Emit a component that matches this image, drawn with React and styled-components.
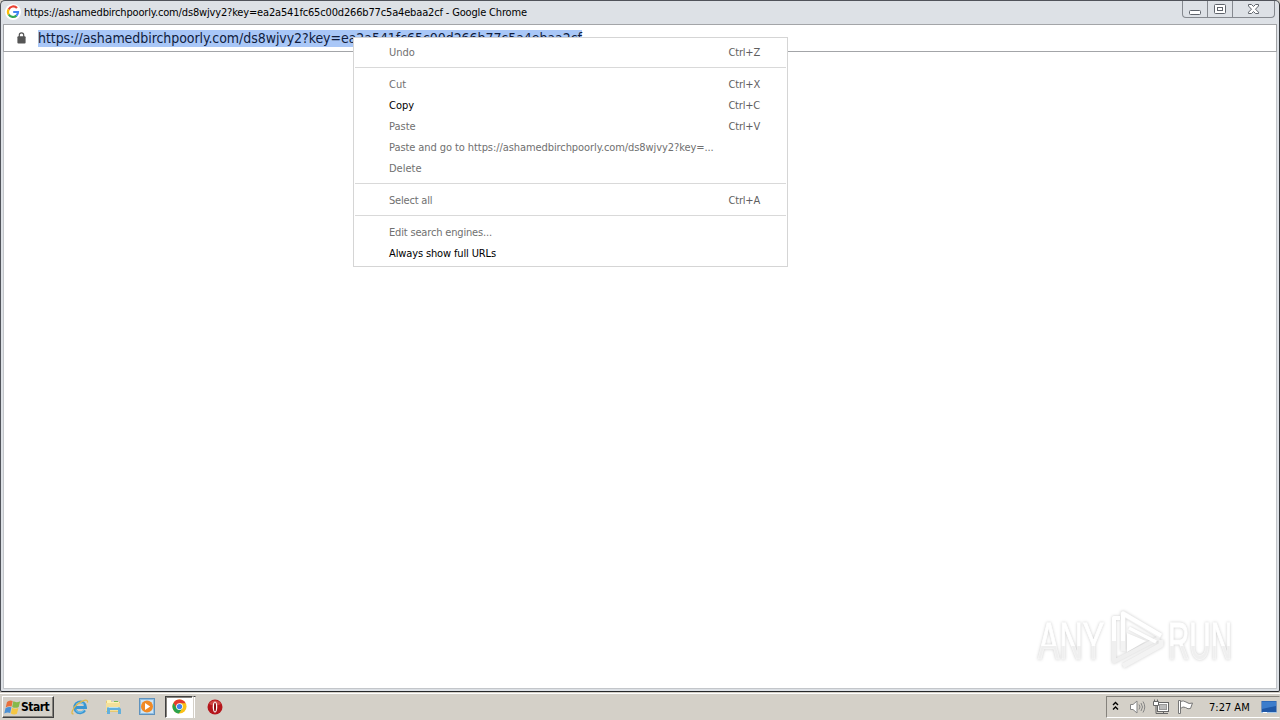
import React from "react";
import styled, { createGlobalStyle } from "styled-components";

const Global = createGlobalStyle`
  * { box-sizing: border-box; }
  body { margin: 0; overflow: hidden; background: #d4d0c8; }
`;

const Screen = styled.div`
  position: relative;
  display: flex;
  flex-direction: column;
  width: 1280px;
  height: 720px;
  overflow: hidden;
  font-family: "DejaVu Sans Condensed", "DejaVu Sans", sans-serif;
  font-stretch: condensed;
  font-size: 11px;
  color: #000;
  svg { display: block; flex: none; }
`;

const Window = styled.section`
  display: flex;
  flex-direction: column;
  height: 692px;
  padding: 0 2px 2px;
  background: #dde1e6;
  border: 1px solid #50535a;
  border-bottom-color: #26282b;
  border-right-color: #34373b;
  border-radius: 5px 5px 2px 2px;
`;

const TitleBar = styled.header`
  display: flex;
  align-items: flex-start;
  height: 23px;
  padding-left: 2px;
`;

const Favicon = styled.div`
  margin-top: 3px;
  width: 16px;
  height: 16px;
  border-radius: 50%;
  background: #fff;
`;

const Title = styled.span`
  flex: 1;
  padding-left: 3px;
  line-height: 23px;
  white-space: nowrap;
  letter-spacing: ${(p) => p.$spacing}px;
`;

const Controls = styled.div`
  display: flex;
  height: 17px;
  margin-right: 2px;
  border: 1px solid #85898f;
  border-top: 0;
  border-radius: 0 0 4px 4px;
`;

const Control = styled.div`
  display: flex;
  justify-content: center;
  width: ${(p) => p.$width}px;
  & + & { border-left: 1px solid #85898f; }
`;

const AddressBar = styled.div`
  display: flex;
  align-items: center;
  height: 28px;
  flex: none;
  padding-left: 13px;
  background: #fff;
  border: 1px solid #a3a5a8;
`;

const Url = styled.span`
  margin: 1px 0 0 12px;
  height: 17px;
  line-height: 16px;
  font-size: 14px;
  color: #101c3c;
  background: #a9c7f7;
  white-space: nowrap;
  letter-spacing: ${(p) => p.$spacing}px;
`;

const Page = styled.main`
  flex: 1;
  background: #fff;
  border: 1px solid #c3c6ca;
  border-top: 0;
`;

const Menu = styled.div`
  position: absolute;
  left: 353px;
  top: 37px;
  width: 435px;
  height: 230px;
  padding: 4px 1px 0;
  background: #fff;
  border: 1px solid #d5d5d5;
`;

const MenuItem = styled.div`
  display: flex;
  justify-content: space-between;
  height: 21px;
  padding: 0 26px 0 34px;
  line-height: 21px;
  color: ${(p) => (p.$enabled ? "#000" : "#707070")};
  white-space: nowrap;
`;

const Label = styled.span`
  letter-spacing: ${(p) => p.$spacing || 0}px;
`;

const Shortcut = styled.span`
  color: #5f5f5f;
  letter-spacing: -0.2px;
`;

const Separator = styled.div`
  height: 1px;
  margin: 4px 0 6px;
  background: #d9d9d9;
`;

const Watermark = styled.div`
  position: absolute;
  left: 1038px;
  top: 606px;
  display: flex;
  align-items: center;
  height: 70px;
  filter: drop-shadow(0 0 1.5px rgba(0, 0, 0, 0.2));
`;

const WatermarkWord = styled.div`
  display: flex;
  width: 65px;
`;

const WatermarkText = styled.span`
  flex: none;
  font: 400 51px/60px "Liberation Sans", sans-serif;
  color: transparent;
  background: linear-gradient(#fff 0 56%, #efefef 56%);
  background-clip: text;
  -webkit-text-stroke: 1px rgba(255, 255, 255, 0.4);
  transform: translateY(1px) scaleX(${(p) => p.$scale});
  transform-origin: left;
`;

const Taskbar = styled.footer`
  display: flex;
  align-items: flex-start;
  height: 28px;
  padding-top: 3px;
  background: #d4d0c8;
  box-shadow: inset 0 1px #d4d0c8, inset 0 2px #fff;
`;

const StartButton = styled.div`
  display: flex;
  align-items: center;
  width: 52px;
  height: 22px;
  margin: 1px 0 0 2px;
  padding-left: 1px;
  border: 1px solid;
  border-color: #fff #404040 #404040 #fff;
  box-shadow: inset -1px -1px #85827c;
  font: bold 12px/20px "DejaVu Sans Condensed", "DejaVu Sans", sans-serif;
  font-stretch: condensed;
  letter-spacing: -0.5px;
`;

const Launchers = styled.div`
  display: flex;
  align-items: center;
  flex: 1;
  height: 23px;
  padding-left: 17px;
`;

const Launcher = styled.div`
  display: flex;
  justify-content: center;
  width: ${(p) => p.$width}px;
`;

const ActiveTask = styled.div`
  display: flex;
  align-items: center;
  justify-content: center;
  width: 28px;
  height: 22px;
  margin-left: 1px;
  background: #fff;
  border: 1px solid;
  border-color: #404040 #fff #fff #404040;
  box-shadow: inset 1px 1px #85827c;
`;

const TaskStack = styled.div`
  width: 3px;
  height: 22px;
  margin-right: 1px;
  border-top: 1px solid #404040;
  border-left: 1px solid #d4d0c8;
  border-right: 1px solid #d4d0c8;
  background: #fff;
`;

const Tray = styled.div`
  display: flex;
  align-items: center;
  width: 174px;
  height: 22px;
  margin-top: 1px;
  padding-left: 5px;
  border: 1px solid;
  border-color: #85827c transparent #fff #85827c;
`;

const Clock = styled.span`
  width: 52px;
  margin-left: 15px;
  line-height: 21px;
  white-space: nowrap;
`;

const TrayIcon = styled.div`
  margin-left: ${(p) => p.$gap}px;
`;

const GoogleLogo = () => (
  <svg width="16" height="16" viewBox="0 0 16 16" fill="none" strokeWidth="2.2">
    <path d="M12 4A5 5 0 0 0 3.7 5.5" stroke="#ea4335" />
    <path d="M3.7 5.4A5 5 0 0 0 3.7 10.6" stroke="#fbbc05" />
    <path d="M3.7 10.5A5 5 0 0 0 11.5 11.6" stroke="#34a853" />
    <path d="M8.2 8H13A5 5 0 0 1 11.4 11.7" stroke="#4285f4" />
  </svg>
);

const Lock = () => (
  <svg width="9" height="12" viewBox="0 0 9 12">
    <path d="M2.3 5V3a2.2 2.2 0 0 1 4.4 0v2" fill="none" stroke="#555" strokeWidth="1.2" />
    <rect x="0.4" y="4.2" width="8.2" height="7.2" rx="1" fill="#555" />
  </svg>
);

const Flag = () => (
  <svg width="17" height="17" viewBox="0 0 17 17">
    <path d="M3 3Q5.5.6 8.7 2L7.6 7.6Q4.7 6.5 1.7 8.5Z" fill="#e8703c" />
    <path d="M9.3 2.3Q12.5 4 16.2 2.2L14.7 8Q11.5 9.700 8.200 8Z" fill="#86b94a" />
    <path d="M1.500 9.200Q4.400 7.400 7.400 8.300L6.200 14Q3.500 12.600.300 14.600Z" fill="#4b90d4" />
    <path d="M8.100 8.800Q11.200 10.500 14.400 8.900L12.900 14.800Q10.200 16.400 6.800 14.600Z" fill="#f5c641" />
  </svg>
);

const Explorer = () => (
  <svg width="18" height="18" viewBox="0 0 18 18" fill="none">
    <path d="M13.8 12.300A5.500 5.500 0 1 1 14.600 9.500H5" stroke="#3a96d2" strokeWidth="2.800" />
    <path d="M13.200 12A5.200 5.200 0 0 1 4.600 12M5 6.500Q9 2.500 13 6.500" stroke="#7fcdf2" strokeWidth="1" />
    <path d="M2.500 15.600C-.5 17 1 11 6 6.600S17.500.200 16.500 4.600" stroke="#e0b94d" strokeWidth="1.300" />
  </svg>
);

const Folder = () => (
  <svg width="17" height="17" viewBox="0 0 17 17">
    <path d="M1 3h5l1 1h8v10H1Z" fill="#e5c873" />
    <path d="M2 2h4v2h8v5H2Z" fill="#fff3b5" />
    <path d="M1 5h14v8H1Z" fill="#f4e09a" />
    <path d="M3 9h11l2 2v5h-3v-4H5v4H2v-6Z" fill="#63b0dc" />
    <path d="M3.500 9.500h10" stroke="#b9e2f5" />
    <path d="M9 3h4v1h-4Z" fill="#79b956" />
  </svg>
);

const MediaPlayer = () => (
  <svg width="16" height="17" viewBox="0 0 16 17">
    <rect x=".5" y=".5" width="15" height="16" fill="#91bfe3" stroke="#5f92bd" />
    <rect x="2" y="2" width="12" height="13" fill="#cce5f7" />
    <circle cx="8" cy="8.500" r="6" fill="#f08a25" />
    <path d="M6 5v7l5.200-3.500Z" fill="#fff" />
  </svg>
);

const Chrome = () => (
  <svg width="15" height="15" viewBox="0 0 16 16">
    <circle cx="8" cy="8" r="7.500" fill="#fbc116" />
    <path d="M1.500 4.200A7.500 7.500 0 0 1 14.500 4.500H8L5 9.800Z" fill="#e33b2e" />
    <path d="M1.500 4.200A7.500 7.500 0 0 0 7.400 15.500L11 9.800 8 11.300 5 9.800Z" fill="#2ba24c" />
    <circle cx="8" cy="8" r="3.600" fill="#fff" />
    <circle cx="8" cy="8" r="2.800" fill="#3f83ee" />
  </svg>
);

const Opera = () => (
  <svg width="16" height="16" viewBox="0 0 16 16">
    <circle cx="8" cy="8" r="7.500" fill="#b5161c" />
    <path d="M2 5A7 7 0 0 1 14 5Q8 8 2 5Z" fill="#dc5a55" opacity=".7" />
    <ellipse cx="8" cy="8" rx="2.300" ry="5.500" fill="#fff" />
    <ellipse cx="8" cy="8" rx="1" ry="4.600" fill="#8a080d" />
  </svg>
);

const Speaker = () => (
  <svg width="17" height="16" viewBox="0 0 17 16" fill="none" stroke="#858585">
    <path d="M1.500 5.500H4L8 2v12L4 10.500H1.500Z" fill="#fff" />
    <path d="M10 5.500q2 2.500 0 5M12 4q3 4 0 8M14 2.500q3.500 5.500 0 11" />
  </svg>
);

const Network = () => (
  <svg width="17" height="16" viewBox="0 0 17 16" fill="#fff" stroke="#666">
    <rect x="4.500" y="3.500" width="11" height="9" />
    <rect x="6.500" y="5.500" width="7" height="5" fill="#bbb" stroke="#999" />
    <path d="M6 14.500h9M10.500 12.500v2" />
    <path d="M3 6.500v8h4" fill="none" />
    <path d="M.5 2.500h5v4h-5ZM1.500 .5v2M4.500 .5v2" />
  </svg>
);

const ActionFlag = () => (
  <svg width="17" height="16" viewBox="0 0 17 16" fill="#fff" stroke="#777">
    <path d="M3.500 2.500Q6 1 9 3Q12 5.500 15.500 4L13.500 9.500Q11 10.500 8.500 8.500Q6 7 3.500 9.500" />
    <path d="M1.500 1.500h2v13h-2Z" />
  </svg>
);

const Desktop = () => (
  <svg width="16" height="14" viewBox="0 0 16 14">
    <rect x=".5" y="1" width="15" height="11" fill="#1f58a7" />
    <path d="M1 1.500H15V6L1 9Z" fill="#3c7dcc" />
    <path d="M0 12.500h16" stroke="#a6c7e8" />
    <path d="M2 12.500h4" stroke="#fff" />
  </svg>
);

const PlayMark = () => (
  <svg width="65" height="70" viewBox="0 0 65 70" fill="none" strokeLinejoin="round">
    <path d="M17 12H11V55.500L56 32" stroke="#efefef" strokeWidth="4" />
    <path d="M20 45V7.500L58 30.500M20 60 58 39V34" stroke="#f3f3f3" strokeWidth="5" />
    <path d="M11 35V12H17M20 35V7.500L58 29.500" stroke="#fff" strokeWidth="4" />
    <path d="M26 22 53 36" stroke="#fff" strokeWidth="3.500" />
    <path d="M24 27V46L43 35Z" fill="#fff" />
  </svg>
);

const groups = [
  [{ label: "Undo", keys: "Ctrl+Z" }],
  [
    { label: "Cut", keys: "Ctrl+X" },
    { label: "Copy", keys: "Ctrl+C", enabled: true },
    { label: "Paste", keys: "Ctrl+V" },
    { label: "Paste and go to https://ashamedbirchpoorly.com/ds8wjvy2?key=...", spacing: -0.08 },
    { label: "Delete" },
  ],
  [{ label: "Select all", keys: "Ctrl+A", spacing: -0.2 }],
  [
    { label: "Edit search engines...", spacing: -0.17 },
    { label: "Always show full URLs", enabled: true, spacing: -0.13 },
  ],
];

const address = "https://ashamedbirchpoorly.com/ds8wjvy2?key=ea2a541fc65c00d266b77c5a4ebaa2cf";

export default function App() {
  return (
    <Screen>
      <Global />
      <Window>
        <TitleBar>
          <Favicon><GoogleLogo /></Favicon>
          <Title $spacing={-0.16}>{address} - Google Chrome</Title>
          <Controls>
            <Control $width={24}>
              <svg width="24" height="16" viewBox="0 0 24 16"><rect x="6.500" y="9.500" width="11" height="4" rx="1" fill="#fff" stroke="#5f646c" /></svg>
            </Control>
            <Control $width={25}>
              <svg width="24" height="16" viewBox="0 0 24 16" fill="#fff" stroke="#5f646c"><rect x="6.500" y="3.500" width="11" height="9" rx="1" /><rect x="9.500" y="6.500" width="5" height="3" /></svg>
            </Control>
            <Control $width={42}>
              <svg width="24" height="16" viewBox="0 0 24 16"><path d="M6.500 3.500h3l2 2 2-2h3v1.500L13.500 8.200l3 3v1.300h-3l-2-2-2 2h-3v-1.300l3-3-3-3.200Z" fill="#fff" stroke="#5f646c" /></svg>
            </Control>
          </Controls>
        </TitleBar>
        <AddressBar>
          <Lock />
          <Url $spacing={-0.06}>{address}</Url>
        </AddressBar>
        <Page />
      </Window>
      <Taskbar>
        <StartButton><Flag />Start</StartButton>
        <Launchers>
          <Launcher $width={18}><Explorer /></Launcher>
          <Launcher $width={48}><Folder /></Launcher>
          <Launcher $width={20}><MediaPlayer /></Launcher>
          <Launcher $width={7} />
          <ActiveTask><Chrome /></ActiveTask>
          <TaskStack />
          <Launcher $width={36}><Opera /></Launcher>
        </Launchers>
        <Tray>
          <svg width="7" height="12" viewBox="0 0 7 12" fill="none" stroke="#000" strokeWidth="1.400"><path d="M1 4 3.500 1.500 6 4M1 8.500 3.500 6 6 8.500" /></svg>
          <TrayIcon $gap={10}><Speaker /></TrayIcon>
          <TrayIcon $gap={7}><Network /></TrayIcon>
          <TrayIcon $gap={7}><ActionFlag /></TrayIcon>
          <Clock>7:27 AM</Clock>
          <Desktop />
        </Tray>
      </Taskbar>
      <Menu>
        {groups.map((items, g) => (
          <React.Fragment key={g}>
            {g > 0 && <Separator />}
            {items.map((item) => (
              <MenuItem key={item.label} $enabled={item.enabled}>
                <Label $spacing={item.spacing}>{item.label}</Label>
                {item.keys && <Shortcut>{item.keys}</Shortcut>}
              </MenuItem>
            ))}
          </React.Fragment>
        ))}
      </Menu>
      <Watermark>
        <WatermarkWord><WatermarkText $scale={0.63}>ANY</WatermarkText></WatermarkWord>
        <PlayMark />
        <WatermarkWord><WatermarkText $scale={0.58}>RUN</WatermarkText></WatermarkWord>
      </Watermark>
    </Screen>
  );
}
